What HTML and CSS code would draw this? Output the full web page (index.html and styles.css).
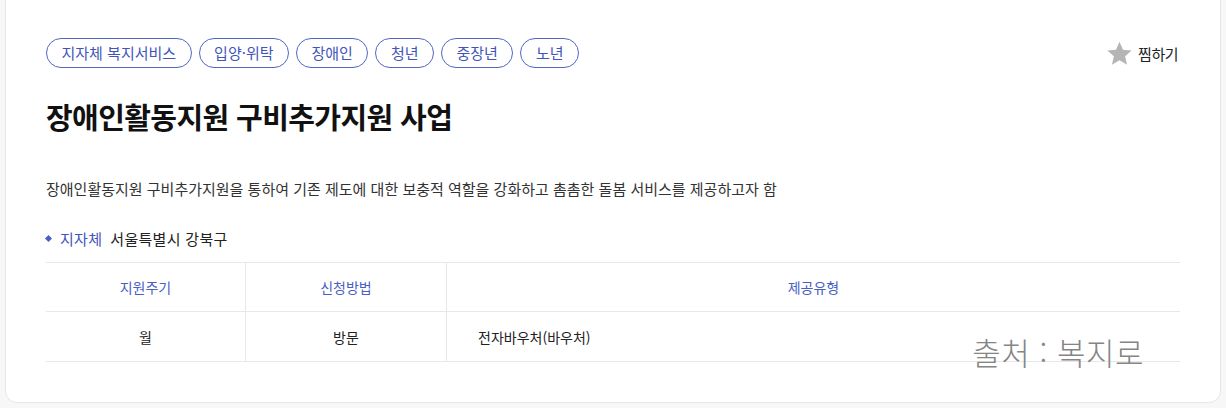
FILE: index.html
```html
<!DOCTYPE html>
<html lang="ko">
<head>
    <meta charset="utf-8">
    <title>장애인활동지원 구비추가지원 사업</title>
    <link rel="stylesheet" href="styles.css">
</head>
<body>
    <div class="card">
        <div class="top">
            <ul class="tags">
                <li>지자체 복지서비스</li>
                <li>입양·위탁</li>
                <li>장애인</li>
                <li>청년</li>
                <li>중장년</li>
                <li>노년</li>
            </ul>
            <button class="zzim">
                <svg width="27" height="27" viewBox="0 0 24 24"><path d="M12 1.5l3.1 7.1 7.7.7-5.8 5.1 1.7 7.6L12 18l-6.7 4 1.7-7.6-5.8-5.1 7.7-.7z" fill="#b5b5b5"/></svg>
                <span>찜하기</span>
            </button>
        </div>
        <h1 class="title">장애인활동지원 구비추가지원 사업</h1>
        <p class="desc">장애인활동지원 구비추가지원을 통하여 기존 제도에 대한 보충적 역할을 강화하고 촘촘한 돌봄 서비스를 제공하고자 함</p>
        <div class="region">
            <span class="label">지자체</span>
            <span>서울특별시 강북구</span>
        </div>
        <table class="info">
            <tr>
                <th class="c1">지원주기</th>
                <th class="c2">신청방법</th>
                <th>제공유형</th>
            </tr>
            <tr>
                <td>월</td>
                <td>방문</td>
                <td class="left">전자바우처(바우처)</td>
            </tr>
        </table>
        <div class="source">출처 : 복지로</div>
    </div>
</body>
</html>
```

FILE: styles.css
```css
body {
    margin: 0;
    padding: 0;
    background-color: #f7f7f8;
    font-family: "Noto Sans CJK KR", "Noto Sans", sans-serif;
    color: #222;
}
.card {
    position: relative;
    margin: -12px 5px 0 5px;
    height: 415px;
    box-sizing: border-box;
    padding: 49px 40px 0 40px;
    background-color: #fff;
    border: 1px solid #e6e6e8;
    border-radius: 12px;
}
.top {
    display: flex;
    justify-content: space-between;
    align-items: center;
}
.tags {
    list-style-type: none;
    margin: 0;
    padding: 0;
    display: flex;
    gap: 7px;
}
.tags li {
    height: 30px;
    line-height: 28px;
    box-sizing: border-box;
    padding: 0 14.5px;
    border: 1px solid #5266c6;
    border-radius: 15px;
    color: #3f55b9;
    font-size: 15px;
}
.zzim {
    display: flex;
    align-items: center;
    gap: 5px;
    margin-right: 2px;
    border: none;
    background: none;
    padding: 0;
    font-family: inherit;
    font-size: 15px;
    color: #222;
    letter-spacing: -0.5px;
}
.title {
    margin: 28px 0 0 0;
    font-size: 29px;
    font-weight: 700;
    letter-spacing: -0.6px;
    color: #111;
    line-height: 40px;
}
.desc {
    margin: 42px 0 0 0;
    font-size: 15px;
    color: #333;
    line-height: 22px;
}
.region {
    margin-top: 28px;
    font-size: 15px;
    letter-spacing: 0.3px;
    display: flex;
    align-items: center;
    gap: 8px;
    color: #222;
}
.region .label {
    color: #3f55b9;
    display: flex;
    align-items: center;
    gap: 9px;
}
.region .label::before {
    content: "";
    width: 5px;
    height: 5px;
    background-color: #4a5fc4;
    transform: rotate(45deg);
}
.info {
    margin-top: 13px;
    width: 100%;
    border-collapse: collapse;
    font-size: 14px;
}
.info tr {
    border-top: 1px solid #e8e8ea;
    border-bottom: 1px solid #e8e8ea;
}
.info th,
.info td {
    padding: 0;
}
.info th {
    height: 48px;
    font-weight: 400;
    color: #4a5fc4;
    text-align: center;
}
.info td {
    height: 49px;
    text-align: center;
    color: #222;
}
.info th + th,
.info td + td {
    border-left: 1px solid #e8e8ea;
}
.info .c1 {
    width: 199px;
}
.info .c2 {
    width: 200px;
}
.info td.left {
    text-align: left;
    padding-left: 31px;
}
.source {
    position: absolute;
    right: 76px;
    top: 340px;
    font-size: 31px;
    font-weight: 300;
    color: #858585;
    letter-spacing: 0.5px;
}
```
